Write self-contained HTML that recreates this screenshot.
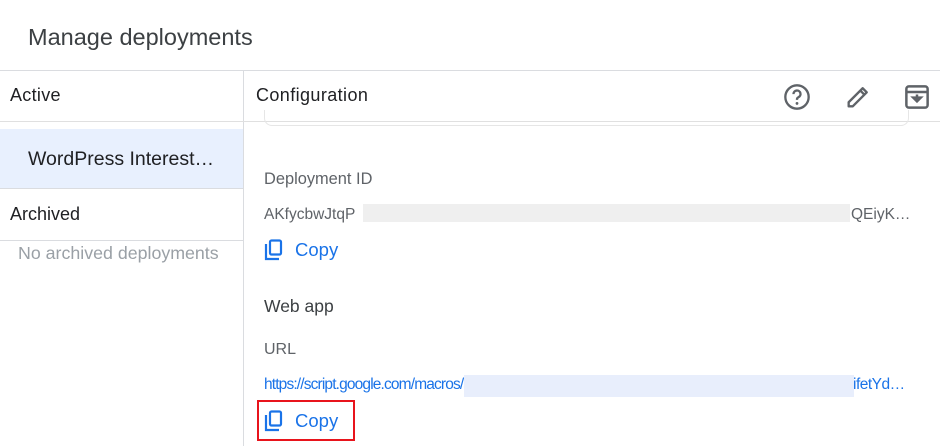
<!DOCTYPE html>
<html><head><style>
body{margin:0;width:940px;height:446px;background:#fff;font-family:"Liberation Sans",Arial,sans-serif;position:relative;overflow:hidden}
.a{position:absolute;white-space:nowrap}
</style></head><body>
<div class="a" style="left:28px;top:24px;font-size:23.5px;color:#3c4043">Manage deployments</div>
<div class="a" style="left:0;top:70px;width:940px;height:1px;background:#dadce0"></div>
<div class="a" style="left:243px;top:70px;width:1px;height:376px;background:#dadce0"></div>
<div class="a" style="left:0;top:121px;width:940px;height:1px;background:#e0e0e0"></div>
<div class="a" style="left:10px;top:85px;font-size:18px;color:#202124;letter-spacing:0.3px">Active</div>
<div class="a" style="left:256px;top:85px;font-size:18px;color:#202124;letter-spacing:0.4px">Configuration</div>
<div class="a" style="left:0;top:129px;width:243px;height:59px;background:#e8f0fe;border-bottom:1px solid #dadce0"></div>
<div class="a" style="left:28px;top:148px;font-size:19.5px;color:#202124">WordPress Interest…</div>
<div class="a" style="left:10px;top:204px;font-size:18px;color:#202124">Archived</div>
<div class="a" style="left:0;top:240px;width:243px;height:1px;background:#dadce0"></div>
<div class="a" style="left:18px;top:243px;font-size:17.8px;color:#9aa0a6">No archived deployments</div>
<div class="a" style="left:264px;top:110px;width:643px;height:15px;border:1px solid #e6e6e6;border-top:none;border-radius:0 0 8px 8px"></div>
<svg class="a" style="left:783px;top:83px" width="28" height="28" viewBox="0 0 24 24"><circle cx="12" cy="12" r="10" fill="none" stroke="#5f6368" stroke-width="2"/><path d="M9 9.5a3 3 0 1 1 4.2 2.7c-.8.4-1.2 1-1.2 1.8v.5" fill="none" stroke="#5f6368" stroke-width="2"/><circle cx="12" cy="17.5" r="1.2" fill="#5f6368"/></svg>
<svg class="a" style="left:844px;top:83px" width="28" height="28" viewBox="0 0 24 24"><path d="M4 20v-3.5L16 4.5l3.5 3.5L7.5 20z" fill="none" stroke="#5f6368" stroke-width="2" stroke-linejoin="round"/><path d="M14 6.5l3.5 3.5" stroke="#5f6368" stroke-width="2"/></svg>
<svg class="a" style="left:902px;top:82px" width="30" height="30" viewBox="0 0 24 24"><rect x="3.5" y="3.5" width="17" height="17" rx="2" fill="none" stroke="#5f6368" stroke-width="2"/><path d="M3.5 8h17" stroke="#5f6368" stroke-width="2"/><path d="M12 10v5M9 12.5l3 3 3-3z" stroke="#5f6368" stroke-width="2" fill="#5f6368"/></svg>
<div class="a" style="left:264px;top:170px;font-size:16.4px;color:#5f6368">Deployment ID</div>
<div class="a" style="left:264px;top:206px;font-size:15.5px;color:#5f6368">AKfycbwJtqP</div>
<div class="a" style="left:363px;top:204px;width:487px;height:18px;background:#efefef"></div>
<div class="a" style="left:851px;top:206px;font-size:15.5px;color:#5f6368">QEiyK…</div>
<svg class="a" style="left:264px;top:239px" width="20" height="22" viewBox="0 0 20 22"><path d="M2 5v15h13" fill="none" stroke="#1a73e8" stroke-width="2.2"/><rect x="6" y="1.5" width="11" height="14" rx="1.5" fill="none" stroke="#1a73e8" stroke-width="2.2"/></svg>
<div class="a" style="left:295px;top:239px;font-size:18.5px;color:#1a73e8">Copy</div>
<div class="a" style="left:264px;top:296px;font-size:17.5px;color:#3c4043">Web app</div>
<div class="a" style="left:264px;top:341px;font-size:16px;color:#5f6368">URL</div>
<div class="a" style="left:264px;top:376px;font-size:15.5px;color:#1a73e8;letter-spacing:-0.85px">https://script.google.com/macros/s/</div>
<div class="a" style="left:464px;top:375px;width:390px;height:22px;background:#e8eefc"></div>
<div class="a" style="left:853px;top:376px;font-size:15.5px;color:#1a73e8;letter-spacing:-0.5px">ifetYd…</div>
<div class="a" style="left:257px;top:400px;width:94px;height:37px;border:2px solid #e8141c"></div>
<svg class="a" style="left:264px;top:410px" width="20" height="22" viewBox="0 0 20 22"><path d="M2 5v15h13" fill="none" stroke="#1a73e8" stroke-width="2.2"/><rect x="6" y="1.5" width="11" height="14" rx="1.5" fill="none" stroke="#1a73e8" stroke-width="2.2"/></svg>
<div class="a" style="left:295px;top:410px;font-size:18.5px;color:#1a73e8">Copy</div>
</body></html>
